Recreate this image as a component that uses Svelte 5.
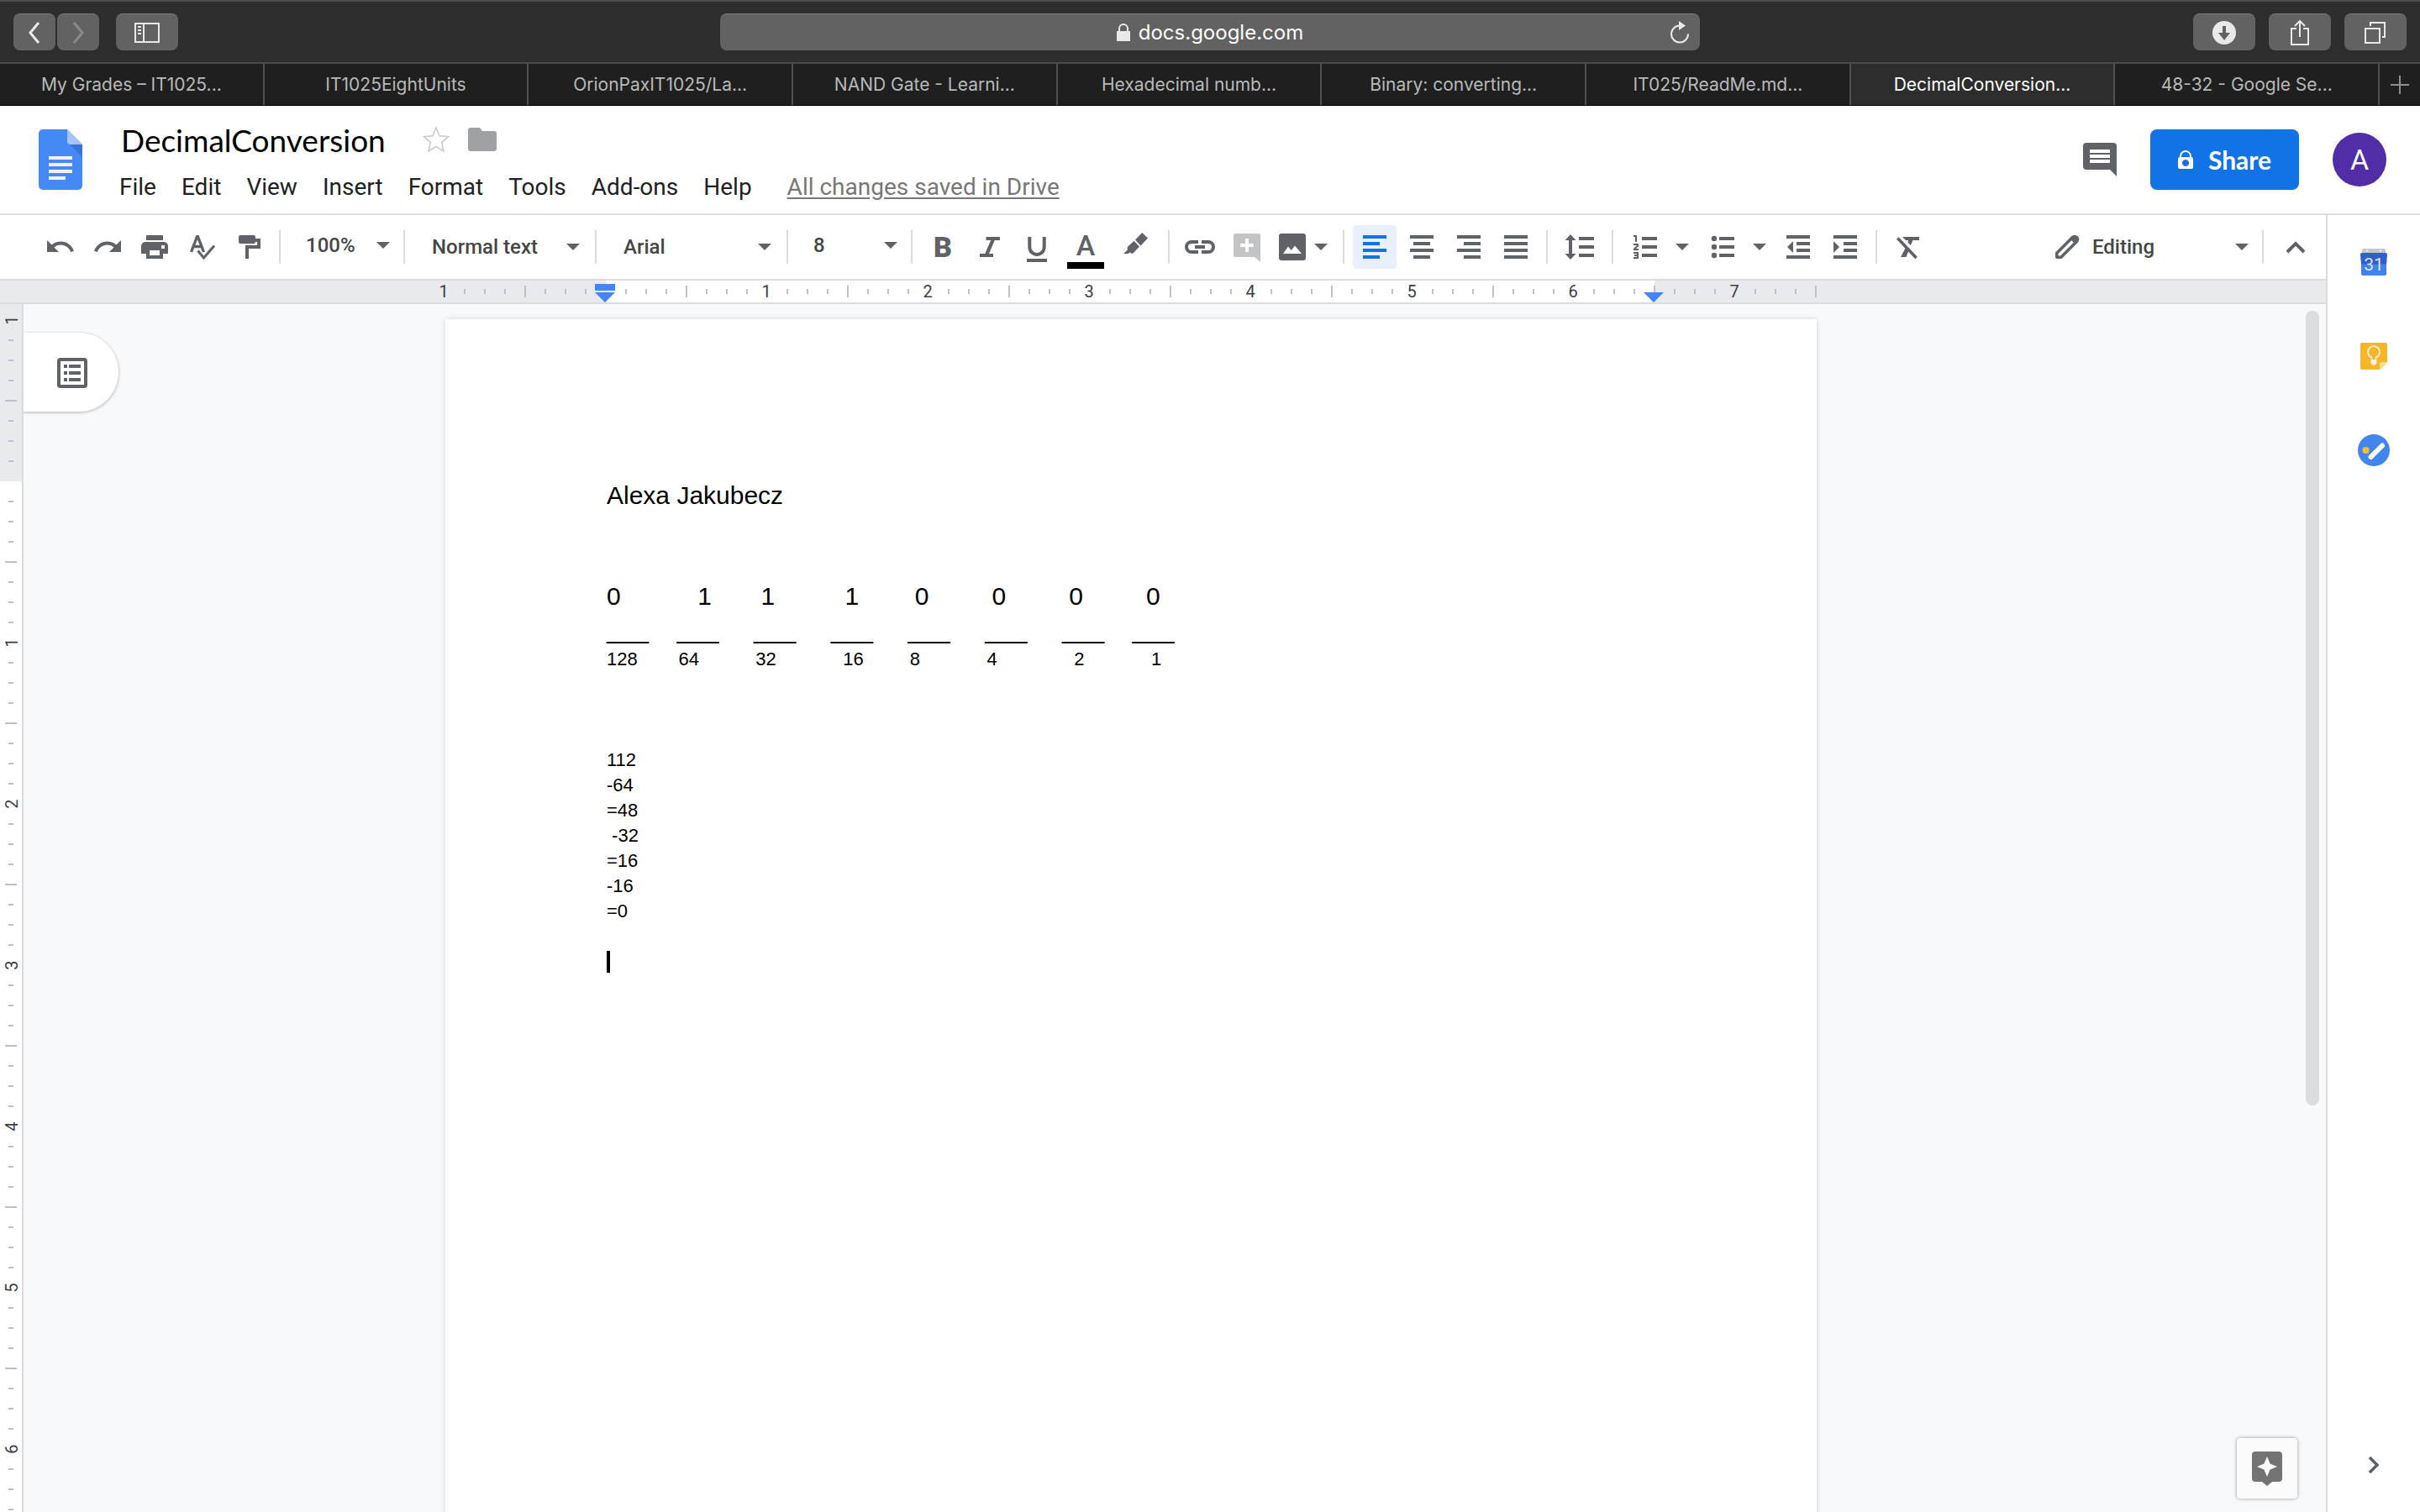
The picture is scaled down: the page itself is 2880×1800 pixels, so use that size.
<script>
  const tabs = [
    'My Grades – IT1025...',
    'IT1025EightUnits',
    'OrionPaxIT1025/La...',
    'NAND Gate - Learni...',
    'Hexadecimal numb...',
    'Binary: converting...',
    'IT025/ReadMe.md...',
    'DecimalConversion...',
    '48-32 - Google Se...'
  ];
  const activeTab = 7;
  const menus = ['File', 'Edit', 'View', 'Insert', 'Format', 'Tools', 'Add-ons', 'Help'];

  const sp = (n) => ' '.repeat(n);
  const blank = (size) => ({ size, text: ' ' });
  const lines = [
    { size: 'big', text: 'Alexa Jakubecz' },
    blank('big'),
    blank('big'),
    { size: 'big', text: '0' + sp(11) + '1' + sp(7) + '1' + sp(10) + '1' + sp(8) + '0' + sp(9) + '0' + sp(9) + '0' + sp(9) + '0' },
    { size: 'big', text: [4, 5, 5, 5, 5, 5, 4].map((n) => '___' + sp(n)).join('') + '___' },
    { size: 'small', text: '128' + sp(8) + '64' + sp(11) + '32' + sp(13) + '16' + sp(9) + '8' + sp(13) + '4' + sp(15) + '2' + sp(13) + '1' },
    blank('small'),
    blank('small'),
    blank('small'),
    { size: 'small', text: '112' },
    { size: 'small', text: '-64' },
    { size: 'small', text: '=48' },
    { size: 'small', text: ' -32' },
    { size: 'small', text: '=16' },
    { size: 'small', text: '-16' },
    { size: 'small', text: '=0' },
    blank('small')
  ];

  // Rulers: one inch is 192 units, a tick every eighth of an inch.
  const marks = (count) =>
    Array.from({ length: count + 1 }, (_, k) => {
      const fromMargin = k - 8;
      const kind = k % 8 === 0 ? 'number' : k % 4 === 0 ? 'long' : 'short';
      return { at: k * 24, kind, label: Math.abs(fromMargin / 8) };
    }).filter((m) => !(m.kind === 'number' && m.label === 0));
  const hMarks = marks(68);
  const vMarks = marks(62);

  // Toolbar glyphs on a 36-unit grid.
  const icons = {
    undo: '<path transform="translate(2 10) scale(1.56) translate(-2 -7)" d="M12.5 8c-2.65 0-5.05.99-6.9 2.6L2 7v9h9l-3.62-3.62c1.39-1.16 3.16-1.88 5.12-1.88 3.54 0 6.55 2.31 7.6 5.5l2.37-.78C21.08 11.03 17.15 8 12.5 8z"/>',
    redo: '<path transform="translate(34 10) scale(-1.56 1.56) translate(-2 -7)" d="M12.5 8c-2.65 0-5.05.99-6.9 2.6L2 7v9h9l-3.62-3.62c1.39-1.16 3.16-1.88 5.12-1.88 3.54 0 6.55 2.31 7.6 5.5l2.37-.78C21.08 11.03 17.15 8 12.5 8z"/>',
    print: '<path fill-rule="evenodd" d="M8 4h20v6H8zM7 12h22a5 5 0 0 1 5 5v9h-6v6H8v-6H2v-9a5 5 0 0 1 5-5zM12 22v6h12v-6zM26 16v4h4v-4z"/>',
    spell: '<g fill="none" stroke="currentColor" stroke-width="3.4"><path d="M5.5 24L12.6 5.6h.8L20.5 24M8 17.5h10"/><path stroke-width="3" d="M13.5 22.5l7 8.5L33 16.5"/></g>',
    paint: '<rect x="6" y="4" width="20" height="10" rx="2"/><path d="M26 8h6v12H18v12h-4V16h14v-4h-2z"/>',
    italic: '<path d="M13.5 6H30v4h-6.200L17 26h5v4H6v-4h6.200l7-16h-5.700z"/>',
    underline: '<path fill="none" stroke="currentColor" stroke-width="4" d="M9.300 6v12.300a8.700 8.700 0 0 0 17.400 0V6"/><path d="M6 32h24v4H6z"/>',
    marker: '<path d="M25.300 1L32 7.600 23.500 16.400 17 9.500zM15.500 10.800L22 17.600 14.500 25.600c-1.500.6-2.500 0-3.500-1.200L8.500 26H3.200l4.800-4.800c-.6-1.400-.5-2.600.3-3.600z"/>',
    link: '<g fill="none" stroke="currentColor" stroke-width="4"><path d="M16 12H8a6 6 0 0 0 0 12h8M20 12h8a6 6 0 0 1 0 12h-8M12 18h12"/></g>',
    addComment: '<path fill="#c3c4c6" d="M4 2h28a2 2 0 0 1 2 2v32l-7-6H4a2 2 0 0 1-2-2V4a2 2 0 0 1 2-2z"/><path fill="#fff" d="M16 8h4v6h6v4h-6v6h-4v-6h-6v-4h6z"/>',
    image: '<rect x="2" y="2" width="32" height="32" rx="3"/><path fill="#fff" d="M7 26l6-8.500 3.700 4.500L21 16.500 29 26z"/>',
    left: '<path d="M4 4h28v4H4zM4 12h20v4H4zM4 20h28v4H4zM4 28h20v4H4z"/>',
    center: '<path d="M4 4h28v4H4zM8 12h20v4H8zM4 20h28v4H4zM8 28h20v4H8z"/>',
    right: '<path d="M4 4h28v4H4zM12 12h20v4H12zM4 20h28v4H4zM12 28h20v4H12z"/>',
    justify: '<path d="M4 4h28v4H4zM4 12h28v4H4zM4 20h28v4H4zM4 28h28v4H4z"/>',
    spacing: '<path d="M7 3l6.500 7H9v16h4.500L7 33 .5 26H5V10H.5zM17 6h18v4H17zM17 16h18v4H17zM17 26h18v4H17z"/>',
    numbered: '<path d="M14 6h18v4H14zM14 16h18v4H14zM14 26h18v4H14z"/><path fill="none" stroke="currentColor" stroke-width="2" d="M4 5h3v7M4 15h5v1.500L5 20.500V21h5M4 25h5v6H4M5 28h4"/>',
    bulleted: '<circle cx="8" cy="8" r="3.200"/><circle cx="8" cy="18" r="3.200"/><circle cx="8" cy="28" r="3.200"/><path d="M14 6h18v4H14zM14 16h18v4H14zM14 26h18v4H14z"/>',
    outdent: '<path d="M4 4h28v4H4zM16 12h16v4H16zM16 20h16v4H16zM4 28h28v4H4zM12 11v14l-7-7z"/>',
    indent: '<path d="M4 4h28v4H4zM16 12h16v4H16zM16 20h16v4H16zM4 28h28v4H4zM4 11v14l7-7z"/>',
    clear: '<path d="M12 6h20v4h-7.500l-2.600 6-3.600-3.600 1-2.400H16zM16.500 17.500l3.600 3.600L16.500 30H10z"/><path stroke="currentColor" stroke-width="3.600" d="M6.300 7.500L28.600 31"/>',
    pencil: '<path fill="none" stroke="currentColor" stroke-width="3.600" stroke-linejoin="round" d="M5.800 30.200v-5L24.500 6.500a3.400 3.400 0 0 1 5 5L10.800 30.200z"/><path d="M21 8l4-3.500c4-1 7 2 6 6L28 15z"/>',
    up: '<path fill="none" stroke="currentColor" stroke-width="4" d="M8 24l10-10 10 10"/>',
    next: '<path fill="none" stroke="currentColor" stroke-width="3.600" d="M13 9l9 9-9 9"/>'
  };

  let title = $state('DecimalConversion');
</script>

{#snippet icon(name)}
  <svg class="icon" viewBox="0 0 36 36" fill="currentColor" aria-hidden="true">{@html icons[name]}</svg>
{/snippet}

{#snippet tool(name, label)}
  <button class="tool" aria-label={label}>{@render icon(name)}</button>
{/snippet}

{#snippet caret()}
  <svg class="caret-icon" viewBox="0 0 16 8" aria-hidden="true"><path fill="currentColor" d="M0 0h16L8 8z" /></svg>
{/snippet}

{#snippet picker(kind, label, value)}
  <label class="picker {kind}">
    <select aria-label={label}><option>{value}</option></select>
    {@render caret()}
  </label>
{/snippet}

<div class="app">
  <div class="browser">
    <div class="nav">
      <div class="group">
        <div class="group pair">
          <button class="chrome narrow" aria-label="Back">
            <svg width="16" height="26" viewBox="0 0 16 26"><path d="M13 1L3 13l10 12" /></svg>
          </button>
          <button class="chrome narrow dim" aria-label="Forward">
            <svg width="16" height="26" viewBox="0 0 16 26"><path d="M3 1l10 12L3 25" /></svg>
          </button>
        </div>
        <button class="chrome side-toggle" aria-label="Show sidebar">
          <svg width="30" height="24" viewBox="0 0 30 24"><path d="M1 1h28v22H1zM11 1v22M4 5h4M4 9h4M4 13h4" /></svg>
        </button>
      </div>
      <div class="address">
        <span></span>
        <span class="host">
          <svg width="16" height="22" viewBox="0 0 16 22"><path class="solid" d="M0 9h16v12H0z" /><path d="M3 10V6a5 5 0 0 1 10 0v4" /></svg>
          docs.google.com
        </span>
        <button class="reload" aria-label="Reload">
          <svg width="24" height="28" viewBox="0 0 24 28"><path d="M12 5.500A10 10 0 1 0 22 15.500" /><path class="solid" d="M11 0l8 5.500-8 5.500z" /></svg>
        </button>
      </div>
      <div class="group end">
        <button class="chrome" aria-label="Downloads">
          <svg width="28" height="28" viewBox="0 0 28 28"><circle class="solid" cx="14" cy="14" r="14" /><path class="cut" d="M12 6h4v8h5l-7 9-7-9h5z" /></svg>
        </button>
        <button class="chrome" aria-label="Share page">
          <svg width="22" height="32" viewBox="0 0 22 32"><path d="M7 11H1v19h20V11h-6M11 2v19M5 8l6-6 6 6" /></svg>
        </button>
        <button class="chrome" aria-label="Show all tabs">
          <svg width="26" height="26" viewBox="0 0 26 26"><path d="M1 8h17v17H1zM7 5V1h17v17h-3" /></svg>
        </button>
      </div>
    </div>
    <div class="tabs" role="tablist">
      {#each tabs as tab, i}
        <button class="tab" class:active={i === activeTab} role="tab" aria-selected={i === activeTab}>{tab}</button>
      {/each}
      <button class="new-tab" aria-label="New tab">
        <svg width="22" height="22" viewBox="0 0 22 22"><path d="M11 0v22M0 11h22" /></svg>
      </button>
    </div>
  </div>

  <header>
    <svg class="logo" viewBox="0 0 52 72" aria-hidden="true">
      <path fill="#4688f4" d="M5 0h29l18 18v49a5 5 0 0 1-5 5H5a5 5 0 0 1-5-5V5a5 5 0 0 1 5-5z" />
      <path fill="#3a72dc" d="M36 17l16 16V18z" />
      <path fill="#a5c5fa" d="M34 0l18 18H38a4 4 0 0 1-4-4z" />
      <path fill="#f1f1f1" d="M12 32h28v4H12zM12 40h28v4H12zM12 48h28v4H12zM12 56h20v4H12z" />
    </svg>
    <div class="heading">
      <div class="title-row">
        <input class="title" aria-label="Document title" bind:value={title} />
        <button class="plain" aria-label="Star">
          <svg width="32" height="32" viewBox="0 0 32 32"><path fill="none" stroke="#c6c8cb" stroke-width="1.500" d="M16 2l4 9.800 10.600.8-8 7 2.400 10.400-9-5.600-9 5.600 2.400-10.400-8-7 10.600-.8z" /></svg>
        </button>
        <button class="plain" aria-label="Move to folder">
          <svg width="34" height="28" viewBox="0 0 34 28"><path fill="#a0a1a5" d="M3 0h11l3 4h14a3 3 0 0 1 3 3v18a3 3 0 0 1-3 3H3a3 3 0 0 1-3-3V3a3 3 0 0 1 3-3z" /></svg>
        </button>
      </div>
      <nav>
        {#each menus as menu}
          <button class="menu">{menu}</button>
        {/each}
        <a class="saved" href="#history">All changes saved in Drive</a>
      </nav>
    </div>
    <button class="plain comments" aria-label="Open comment history">
      <svg width="40" height="40" viewBox="0 0 40 40"><path fill="#5f6368" d="M4 0h32a4 4 0 0 1 4 4v36l-8-8H4a4 4 0 0 1-4-4V4a4 4 0 0 1 4-4z" /><path fill="#fff" d="M8 8h24v4H8zM8 14h24v4H8zM8 20h24v4H8z" /></svg>
    </button>
    <button class="share">
      <svg width="18" height="22" viewBox="0 0 18 22"><path fill="#fff" fill-rule="evenodd" d="M2 8h14a2 2 0 0 1 2 2v10a2 2 0 0 1-2 2H2a2 2 0 0 1-2-2V10a2 2 0 0 1 2-2zM9 11a4 4 0 1 0 .01 0z" /><path fill="none" stroke="#fff" stroke-width="2" d="M3 9V7a6 6 0 0 1 12 0v2" /></svg>
      Share
    </button>
    <button class="avatar" aria-label="Account">A</button>
  </header>

  <div class="body">
    <main>
      <div class="toolbar" role="toolbar">
        {@render tool('undo', 'Undo')}
        {@render tool('redo', 'Redo')}
        {@render tool('print', 'Print')}
        {@render tool('spell', 'Spelling check')}
        {@render tool('paint', 'Paint format')}
        <i class="sep"></i>
        {@render picker('narrow-pick', 'Zoom', '100%')}
        <i class="sep"></i>
        {@render picker('wide', 'Styles', 'Normal text')}
        <i class="sep"></i>
        {@render picker('wide', 'Font', 'Arial')}
        <i class="sep"></i>
        {@render picker('narrow-pick', 'Font size', '8')}
        <i class="sep"></i>
        <button class="tool letter bold">B</button>
        {@render tool('italic', 'Italic')}
        {@render tool('underline', 'Underline')}
        <button class="tool color" aria-label="Text color"><span class="letter">A</span><span class="swatch"></span></button>
        <button class="tool roomy" aria-label="Highlight color">{@render icon('marker')}</button>
        <i class="sep"></i>
        {@render tool('link', 'Insert link')}
        {@render tool('addComment', 'Add comment')}
        <button class="tool combo tight" aria-label="Insert image">{@render icon('image')}{@render caret()}</button>
        <i class="sep"></i>
        <button class="tool on" aria-label="Left align">{@render icon('left')}</button>
        {@render tool('center', 'Center align')}
        {@render tool('right', 'Right align')}
        {@render tool('justify', 'Justify')}
        <i class="sep"></i>
        <button class="tool roomy" aria-label="Line spacing">{@render icon('spacing')}</button>
        <i class="sep"></i>
        <button class="tool combo" aria-label="Numbered list">{@render icon('numbered')}{@render caret()}</button>
        <button class="tool combo" aria-label="Bulleted list">{@render icon('bulleted')}{@render caret()}</button>
        {@render tool('outdent', 'Decrease indent')}
        {@render tool('indent', 'Increase indent')}
        <i class="sep"></i>
        {@render tool('clear', 'Clear formatting')}
        <span class="spacer"></span>
        {@render icon('pencil')}
        {@render picker('mode', 'Mode', 'Editing')}
        <i class="sep"></i>
        <button class="tool roomy" aria-label="Hide the menus">{@render icon('up')}</button>
      </div>

      <div class="ruler">
        <svg width="1632" height="26" viewBox="0 0 1632 26">
          <rect x="192" width="1247" height="26" fill="#fff" />
          {#each hMarks as m}
            {#if m.kind === 'number'}
              <text x={m.at - 2} y="20">{m.label}</text>
            {:else}
              <rect class="tick" x={m.at - 2} y={m.kind === 'long' ? 6 : 10} width="2" height={m.kind === 'long' ? 14 : 6} />
            {/if}
          {/each}
          <path class="stop" d="M178 4h24v8h-24zM178 14h24l-12 12zM1426 14h24l-12 12z" />
        </svg>
      </div>

      <div class="workspace">
        <div class="v-ruler">
          <svg width="26" height="1500" viewBox="0 0 26 1500">
            <rect y="193" width="26" height="1307" fill="#fff" />
            {#each vMarks as m}
              {#if m.kind === 'number'}
                <text transform="translate(21 {m.at + 1}) rotate(-90)">{m.label}</text>
              {:else}
                <rect class="tick" x={m.kind === 'long' ? 6 : 10} y={m.at} width={m.kind === 'long' ? 14 : 6} height="2" />
              {/if}
            {/each}
          </svg>
        </div>
        <div class="canvas">
          <button class="outline" aria-label="Show document outline">
            <svg width="36" height="36" viewBox="0 0 36 36"><rect x="2" y="2" width="32" height="32" rx="2" fill="none" stroke="#5f6368" stroke-width="4" /><path fill="#5f6368" d="M8 8h4v4H8zM14 8h14v4H14zM8 16h4v4H8zM14 16h14v4H14zM8 24h4v4H8zM14 24h14v4H14z" /></svg>
          </button>
          <article class="page">
            {#each lines as line}
              <p class={line.size}>{line.text}</p>
            {/each}
            <div class="cursor"></div>
          </article>
          <div class="scroll-thumb"></div>
          <button class="explore" aria-label="Explore">
            <svg width="36" height="40" viewBox="0 0 36 40"><path fill="#737373" fill-rule="evenodd" d="M4 0h28a4 4 0 0 1 4 4v28a4 4 0 0 1-4 4h-8l-6 5-6-5H4a4 4 0 0 1-4-4V4a4 4 0 0 1 4-4zM18 6l-3.600 8.400L6 18l8.400 3.600L18 30l3.600-8.400L30 18l-8.400-3.600z" /></svg>
          </button>
        </div>
      </div>
    </main>

    <aside>
      <button class="plain addon" aria-label="Calendar">
        <svg width="32" height="32" viewBox="0 0 32 32">
          <path fill="#c6c6c6" d="M4 0h24a2 2 0 0 1 2 2v4H2V2a2 2 0 0 1 2-2z" /><circle cx="8" cy="2.500" r="1" fill="#fff" /><circle cx="24" cy="2.500" r="1" fill="#fff" />
          <path fill="#3060cc" d="M2 5h28a2 2 0 0 1 2 2l-1 12H1L0 7a2 2 0 0 1 2-2z" />
          <path fill="#3f82f0" d="M1 18.500h30V30a2 2 0 0 1-2 2H3a2 2 0 0 1-2-2z" />
          <text x="16" y="26" class="date">31</text>
        </svg>
      </button>
      <button class="plain addon" aria-label="Keep">
        <svg width="32" height="32" viewBox="0 0 32 32">
          <path fill="#f6b626" d="M2 0h28a2 2 0 0 1 2 2v21l-9 9H2a2 2 0 0 1-2-2V2a2 2 0 0 1 2-2z" /><path fill="#fddc8a" d="M23 32v-7a2 2 0 0 1 2-2h7z" />
          <path fill="none" stroke="#f5f0e0" stroke-width="1.800" d="M13.500 21v-3.300a7 7 0 1 1 5 0V21z" /><path fill="#f5f0e0" d="M12.500 21h7v4h-1.500l-.5 2h-3l-.5-2h-1.500z" />
        </svg>
      </button>
      <button class="plain addon" aria-label="Tasks">
        <svg width="38" height="38" viewBox="0 0 38 38">
          <circle cx="19" cy="19" r="19" fill="#4285ee" /><circle cx="9.500" cy="19" r="4" fill="#fbc02d" />
          <path stroke="#fff" stroke-width="6" stroke-linecap="round" d="M15.500 27L29 13.500" />
        </svg>
      </button>
      <span class="spacer"></span>
      <button class="plain addon" aria-label="Hide side panel">{@render icon('next')}</button>
    </aside>
  </div>
</div>

<style>
  :global(body) {
    margin: 0;
    background: #fff;
  }
  .app {
    display: flex;
    flex-direction: column;
    height: 100vh;
    overflow: hidden;
    font-family: Roboto, 'Liberation Sans', sans-serif;
    color: #202124;
  }
  button,
  input,
  select {
    margin: 0;
    padding: 0;
    border: 0;
    background: none;
    font: inherit;
    color: inherit;
    line-height: normal;
  }
  svg {
    display: block;
    flex: none;
  }

  /* Browser chrome */
  .browser {
    flex: none;
    background: #2d2d2d;
    border-top: 2px solid #4b4b4b;
    border-bottom: 1px solid #000;
    box-sizing: border-box;
    font-family: Inter, 'Liberation Sans', sans-serif;
  }
  .browser svg {
    fill: none;
    stroke: #e9e9e9;
    stroke-width: 2;
  }
  .browser .solid {
    fill: #e9e9e9;
    stroke: none;
  }
  .browser .cut {
    fill: #626262;
    stroke: none;
  }
  .nav {
    display: grid;
    grid-template-columns: 1fr minmax(400px, 1166px) 1fr;
    align-items: center;
    padding: 14px 16px;
  }
  .group {
    display: flex;
    gap: 16px;
  }
  .group.end {
    justify-content: flex-end;
  }
  .group.pair {
    gap: 2px;
  }
  .chrome {
    display: grid;
    place-items: center;
    box-sizing: border-box;
    width: 74px;
    height: 44px;
    border-top: 1px solid #7c7c7c;
    border-radius: 8px;
    background: #626262;
  }
  .narrow {
    width: 50px;
  }
  .chrome.narrow svg {
    stroke-width: 3;
  }
  .chrome.dim svg {
    stroke: #8a8a8a;
  }
  .side-toggle {
    margin-left: 4px;
  }
  .address {
    display: grid;
    grid-template-columns: 1fr auto 1fr;
    align-items: center;
    height: 44px;
    box-sizing: border-box;
    padding: 0 12px;
    border-top: 1px solid #7c7c7c;
    border-radius: 8px;
    background: #626262;
    color: #fff;
    font-size: 24px;
  }
  .host {
    display: flex;
    align-items: center;
    gap: 10px;
  }
  .reload {
    justify-self: end;
  }
  .tabs {
    display: flex;
    height: 49px;
    border-top: 2px solid #4a4a4a;
    background: #1f1f1f;
  }
  .tab {
    flex: 1;
    min-width: 0;
    border-right: 2px solid #515151;
    color: #b9b9b9;
    font-size: 21px;
    white-space: nowrap;
    overflow: hidden;
  }
  .tab.active {
    background: #2d2d2d;
    color: #fff;
  }
  .new-tab {
    display: grid;
    place-items: center;
    width: 48px;
  }
  .new-tab svg {
    stroke: #8e8e8e;
  }

  /* Document header */
  header {
    flex: none;
    display: flex;
    align-items: center;
    height: 128px;
    padding: 0 40px 0 46px;
    border-bottom: 2px solid #dadce0;
  }
  .logo {
    width: 52px;
    height: 72px;
  }
  .heading {
    flex: 1;
    display: flex;
    flex-direction: column;
    gap: 14px;
    margin-left: 44px;
    padding-top: 6px;
  }
  .title-row {
    display: flex;
    align-items: center;
    height: 44px;
  }
  .title {
    width: 361px;
    padding-left: 2px;
    box-sizing: border-box;
    color: #000;
    font-family: Lato, sans-serif;
    font-size: 37px;
  }
  .title-row .plain + .plain {
    margin-left: 22px;
  }
  nav {
    display: flex;
    align-items: center;
    gap: 30px;
    height: 40px;
    font-size: 28px;
  }
  .saved {
    margin-left: 12px;
    color: #777;
    text-decoration: underline;
    text-underline-offset: 3px;
  }
  .share {
    display: flex;
    align-items: center;
    justify-content: center;
    gap: 18px;
    width: 177px;
    height: 72px;
    margin: 0 40px;
    border-radius: 8px;
    background: #1173e6;
    color: #fff;
    font-family: Lato, sans-serif;
    font-size: 30px;
    font-weight: 700;
  }
  .avatar {
    width: 64px;
    height: 64px;
    border-radius: 50%;
    background: #512da8;
    color: #fff;
    font-size: 34px;
  }

  /* Body */
  .body {
    flex: 1;
    display: flex;
    min-height: 0;
  }
  main {
    flex: 1;
    display: flex;
    flex-direction: column;
    min-width: 0;
  }
  .toolbar {
    flex: none;
    display: flex;
    align-items: center;
    height: 76px;
    padding: 0 6px 0 44px;
    border-bottom: 2px solid #dadce0;
    color: #5f6368;
  }
  .icon {
    width: 36px;
    height: 36px;
  }
  .tool {
    flex: none;
    display: grid;
    place-items: center;
    width: 52px;
    height: 52px;
    margin: 0 2px;
    border-radius: 4px;
  }
  .roomy {
    width: 56px;
  }
  .on {
    background: #e8f0fe;
    color: #1173e6;
  }
  .letter {
    font-size: 34px;
    line-height: 34px;
    font-weight: 500;
  }
  .bold {
    font-weight: 900;
  }
  .color {
    width: 56px;
    align-content: end;
    gap: 3px;
  }
  .swatch {
    width: 44px;
    height: 8px;
    background: #000;
  }
  .combo {
    display: flex;
    align-items: center;
    gap: 18px;
    width: 88px;
    padding-left: 10px;
    box-sizing: border-box;
  }
  .combo.tight {
    gap: 8px;
    width: 74px;
    padding-left: 6px;
  }
  .sep {
    flex: none;
    width: 2px;
    height: 40px;
    margin: 0 8px;
    background: #dadce0;
  }
  .spacer {
    flex: 1;
  }
  .caret-icon {
    width: 16px;
    height: 8px;
  }
  .picker {
    flex: none;
    display: grid;
    align-items: center;
  }
  .picker > :global(*) {
    grid-area: 1 / 1;
  }
  .picker .caret-icon {
    justify-self: end;
    margin-right: 10px;
    pointer-events: none;
  }
  .picker select {
    width: 100%;
    padding-left: 24px;
    appearance: none;
    color: #444746;
    font-size: 24px;
    font-weight: 500;
  }
  .picker.narrow-pick {
    width: 130px;
    padding-bottom: 4px;
  }
  .picker.narrow-pick select {
    padding-left: 22px;
  }
  .picker.narrow-pick .caret-icon,
  .picker.mode .caret-icon {
    margin-right: 8px;
  }
  .picker.wide {
    width: 210px;
  }
  .picker.mode {
    width: 206px;
  }
  .picker.mode select {
    padding-left: 12px;
  }

  /* Rulers */
  .ruler {
    flex: none;
    display: flex;
    justify-content: center;
    padding: 0 104px 0 28px;
    border-bottom: 2px solid #dadce0;
    background: #e8eaed;
  }
  .ruler svg,
  .v-ruler svg {
    overflow: visible;
    font-size: 20px;
    fill: #3c4043;
    text-anchor: middle;
  }
  .tick {
    fill: #bdc1c6;
  }
  .stop {
    fill: #4285f4;
  }
  .workspace {
    flex: 1;
    display: flex;
    min-height: 0;
    background: #f8f9fb;
  }
  .v-ruler {
    width: 26px;
    padding-top: 18px;
    overflow: hidden;
    border-right: 2px solid #dadce0;
    background: #e8eaed;
  }

  /* Page */
  .canvas {
    position: relative;
    flex: 1;
    display: flex;
    justify-content: center;
    align-items: flex-start;
    padding: 18px 104px 0 0;
    overflow: hidden;
  }
  .page {
    flex: none;
    box-sizing: border-box;
    width: 1632px;
    min-height: 2112px;
    padding: 190px 192px;
    background: #fff;
    box-shadow: 0 0 6px rgba(60, 64, 67, 0.2);
    color: #000;
    font-family: 'Liberation Sans', Arial, sans-serif;
  }
  .page p {
    margin: 0;
    white-space: pre;
  }
  .big {
    font-size: 30px;
    line-height: 40px;
  }
  .small {
    font-size: 22px;
    line-height: 30px;
  }
  .cursor {
    width: 4px;
    height: 26px;
    margin-top: 2px;
    background: #000;
  }
  .outline {
    position: absolute;
    top: 34px;
    left: 0;
    display: grid;
    place-items: center;
    box-sizing: border-box;
    width: 113px;
    height: 94px;
    padding: 2px 0 0 3px;
    border-radius: 0 48px 48px 0;
    background: #fff;
    box-shadow: 0 1px 3px 1px rgba(60, 64, 67, 0.25);
  }
  .scroll-thumb {
    position: absolute;
    top: 8px;
    right: 8px;
    width: 16px;
    height: 65.8%;
    border-radius: 8px;
    background: #dadce0;
  }
  .explore {
    position: absolute;
    right: 34px;
    bottom: 16px;
    display: grid;
    place-items: center;
    width: 72px;
    height: 72px;
    border-radius: 4px;
    background: #fafafa;
    box-shadow: 0 0 4px rgba(0, 0, 0, 0.4);
  }
  .explore svg {
    overflow: visible;
  }

  /* Add-on panel */
  aside {
    display: flex;
    flex-direction: column;
    align-items: center;
    width: 110px;
    border-left: 2px solid #dadce0;
    color: #5f6368;
  }
  .addon {
    display: grid;
    place-items: center;
    width: 112px;
    height: 112px;
  }
  .date {
    fill: #dfe6f5;
    font-size: 21px;
    text-anchor: middle;
  }
</style>
